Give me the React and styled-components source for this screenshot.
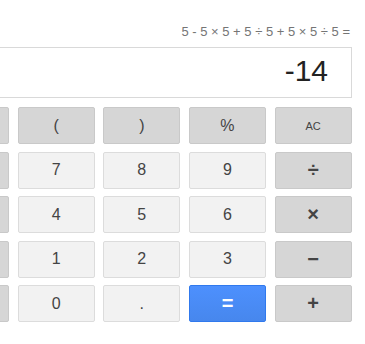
import React from 'react';
import styled, { createGlobalStyle } from 'styled-components';

const GlobalStyle = createGlobalStyle`
  html, body {
    margin: 0;
    padding: 0;
    background: #fff;
  }
  body {
    font-family: "Liberation Sans", Arial, sans-serif;
  }
`;

const Viewport = styled.div`
  width: 365px;
  height: 344px;
  overflow: hidden;
`;

const Calculator = styled.div`
  width: 420px;
  margin-left: -68px;
  padding-top: 24px;
`;

const Expression = styled.div`
  height: 16px;
  line-height: 16px;
  font-size: 13px;
  color: #757575;
  text-align: right;
  padding-right: 2px;
  margin-bottom: 7px;
  white-space: nowrap;
`;

const Display = styled.div`
  box-sizing: border-box;
  height: 51px;
  border: 1px solid #d9d9d9;
  padding: 6px 23px 0 0;
  text-align: right;
  font-size: 30px;
  line-height: 34px;
  color: #222;
  margin-bottom: 9px;
`;

const Keypad = styled.div`
  display: grid;
  grid-template-columns: repeat(5, 77px);
  grid-auto-rows: 37px;
  column-gap: 8.67px;
  row-gap: 7.5px;
`;

const variants = {
  func: `
    background: #d6d6d6;
    border-color: #c9c9c9;
    color: #444;
  `,
  op: `
    background: #d6d6d6;
    border-color: #c9c9c9;
    color: #444;
    font-size: 20px;
    font-weight: bold;
  `,
  digit: `
    background: #f2f2f2;
    border-color: #dcdcdc;
    color: #444;
  `,
  equals: `
    background: linear-gradient(#4d90fe, #4787ed);
    border-color: #3079ed;
    color: #fff;
    font-weight: bold;
    font-size: 20px;
  `,
};

const Key = styled.button`
  box-sizing: border-box;
  border: 1px solid;
  border-radius: 2px;
  margin: 0;
  padding: 0;
  font-family: "Liberation Sans", Arial, sans-serif;
  font-size: ${(p) => (p.$small ? '11px' : '16px')};
  display: flex;
  align-items: center;
  justify-content: center;
  cursor: pointer;
  ${(p) => variants[p.$kind]}
`;

// the left column (x!, ln, log, √, xʸ) is cut off by the window, only its edge shows
const keys = [
  { label: '', kind: 'func', name: 'x!' },
  { label: '(', kind: 'func' },
  { label: ')', kind: 'func' },
  { label: '%', kind: 'func' },
  { label: 'AC', kind: 'func', small: true },
  { label: '', kind: 'func', name: 'ln' },
  { label: '7', kind: 'digit' },
  { label: '8', kind: 'digit' },
  { label: '9', kind: 'digit' },
  { label: '÷', kind: 'op' },
  { label: '', kind: 'func', name: 'log' },
  { label: '4', kind: 'digit' },
  { label: '5', kind: 'digit' },
  { label: '6', kind: 'digit' },
  { label: '×', kind: 'op' },
  { label: '', kind: 'func', name: 'sqrt' },
  { label: '1', kind: 'digit' },
  { label: '2', kind: 'digit' },
  { label: '3', kind: 'digit' },
  { label: '−', kind: 'op' },
  { label: '', kind: 'func', name: 'power' },
  { label: '0', kind: 'digit' },
  { label: '.', kind: 'digit' },
  { label: '=', kind: 'equals' },
  { label: '+', kind: 'op' },
];

export default function App() {
  return (
    <>
      <GlobalStyle />
      <Viewport>
        <Calculator>
          <Expression>5 - 5 × 5 + 5 ÷ 5 + 5 × 5 ÷ 5 =</Expression>
          <Display>-14</Display>
          <Keypad>
            {keys.map((k, i) => (
              <Key key={i} aria-label={k.name || k.label} $kind={k.kind} $small={k.small}>
                {k.label}
              </Key>
            ))}
          </Keypad>
        </Calculator>
      </Viewport>
    </>
  );
}
